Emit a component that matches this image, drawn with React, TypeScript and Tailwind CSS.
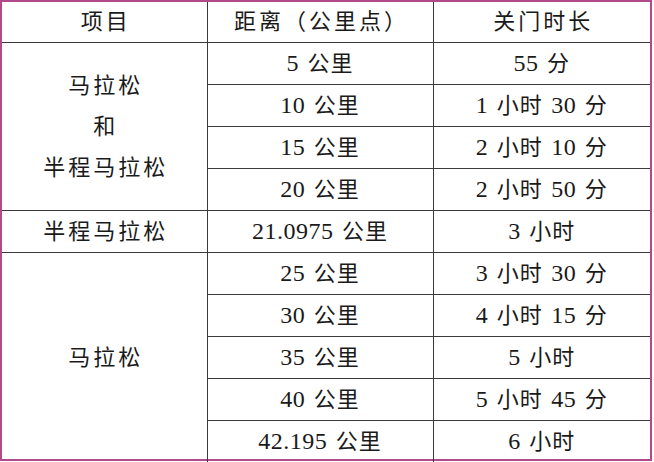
const distances: [string, string][] = [
  ["5 公里", "55 分"],
  ["10 公里", "1 小时 30 分"],
  ["15 公里", "2 小时 10 分"],
  ["20 公里", "2 小时 50 分"],
  ["21.0975 公里", "3 小时"],
  ["25 公里", "3 小时 30 分"],
  ["30 公里", "4 小时 15 分"],
  ["35 公里", "5 小时"],
  ["40 公里", "5 小时 45 分"],
  ["42.195 公里", "6 小时"],
];

const cell = "border-[1.5px] border-[#3a3a3a] text-center align-middle p-0";
const first = cell + " border-l-0";
const last = cell + " border-r-0";

function Label({ text }: { text: string }) {
  return <span className="tracking-[3px] pl-[3px]">{text}</span>;
}

// numbers a bit larger than the chinese, like the Word table
function Value({ text }: { text: string }) {
  const parts = text.split(/([0-9.]+)/).filter(Boolean);
  return (
    <span className="tracking-[1px] [word-spacing:2px]">
      {parts.map((p, i) =>
        /^[0-9.]+$/.test(p) ? (
          <span key={i} className="text-[24px] tracking-[0.5px]">
            {p}
          </span>
        ) : (
          <span key={i}>{p}</span>
        )
      )}
    </span>
  );
}

export default function App() {
  return (
    <div className="w-[654px] h-[462px] bg-white">
      <div
        className="w-[652px] h-[461px] border-2 border-[#b04a8a] text-[22px] text-[#1a1a1a]"
        style={{ fontFamily: '"Liberation Serif", "Noto Sans CJK SC", serif' }}
      >
        <table className="w-full h-full border-collapse table-fixed">
          <colgroup>
            <col className="w-[205px]" />
            <col className="w-[226px]" />
            <col />
          </colgroup>
          <tbody>
            <tr className="h-[40px]">
              <td className={first + " border-t-0"}>
                <Label text="项目" />
              </td>
              <td className={cell + " border-t-0"}>
                <Label text="距离（公里点）" />
              </td>
              <td className={last + " border-t-0"}>
                <Label text="关门时长" />
              </td>
            </tr>
            {distances.map(([d, t], i) => (
              <tr key={d} className="h-[42px]">
                {i === 0 && (
                  <td rowSpan={4} className={first}>
                    <div className="flex flex-col leading-[41px]">
                      <Label text="马拉松" />
                      <Label text="和" />
                      <Label text="半程马拉松" />
                    </div>
                  </td>
                )}
                {i === 4 && (
                  <td className={first}>
                    <Label text="半程马拉松" />
                  </td>
                )}
                {i === 5 && (
                  <td rowSpan={5} className={first}>
                    <Label text="马拉松" />
                  </td>
                )}
                <td className={cell}>
                  <Value text={d} />
                </td>
                <td className={last}>
                  <Value text={t} />
                </td>
              </tr>
            ))}
          </tbody>
        </table>
      </div>
    </div>
  );
}
